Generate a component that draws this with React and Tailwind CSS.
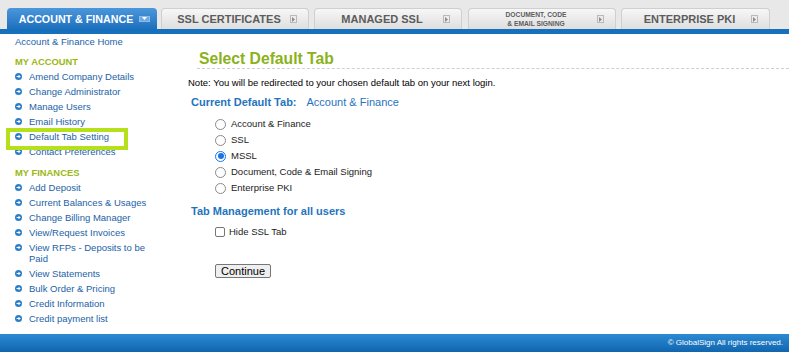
import React from "react";

const FONT = { fontFamily: '"Liberation Sans", Arial, sans-serif' };

function InactiveIcon() {
  return (
    <span className="flex h-[8px] w-[7px] items-center justify-center border border-[#b9b9b9] bg-[#ececec]">
      <svg width="3" height="5" viewBox="0 0 3 5">
        <path d="M0 0 L3 2.5 L0 5 Z" fill="#8c8c8c" />
      </svg>
    </span>
  );
}

function ActiveIcon() {
  return (
    <span className="flex h-[6px] w-[11px] items-center justify-center bg-[#6fa9e0] border border-[#8dbbe8]">
      <svg width="5" height="3" viewBox="0 0 5 3">
        <path d="M0 0 L5 0 L2.5 3 Z" fill="#ffffff" />
      </svg>
    </span>
  );
}

function Tab({ children, active, small, className = "" }) {
  if (active) {
    return (
      <div className="flex h-[21px] w-[150px] shrink-0 items-center rounded-t-[4px] bg-gradient-to-b from-[#4b97dc] to-[#1c70bd] pl-[6px] pr-[7px]">
        <span className="flex-1 pt-[1px] text-center text-[10.7px] font-bold leading-none text-white">{children}</span>
        <ActiveIcon />
      </div>
    );
  }
  return (
    <div className={`flex h-[21px] shrink-0 items-center rounded-t-[4px] border border-b-0 border-[#cfcfcf] bg-gradient-to-b from-[#f7f7f7] to-[#dedede] pl-[6px] pr-[11px] ${className}`}>
      {small ? (
        <span className="flex-1 text-center text-[6.7px] font-bold leading-[9px] text-[#5c5c5c]">{children}</span>
      ) : (
        <span className="flex-1 pt-[1px] text-center text-[11px] font-bold leading-none text-[#5c5c5c]">{children}</span>
      )}
      <InactiveIcon />
    </div>
  );
}

function Bullet() {
  return (
    <span className="mt-[2px] flex h-[7px] w-[7px] shrink-0 items-center justify-center rounded-full bg-[#2b7fc8]">
      <svg width="5" height="5" viewBox="0 0 5 5">
        <path d="M0.6 2.5 H4 M2.5 1 L4 2.5 L2.5 4" stroke="#fff" strokeWidth="1" fill="none" />
      </svg>
    </span>
  );
}

function Item({ children }) {
  return (
    <li className="flex gap-[7px] py-[2px] text-[9.5px] leading-[11px] text-[#1c62a6]">
      <Bullet />
      <span>{children}</span>
    </li>
  );
}

function Radio({ checked, label }) {
  return (
    <div className="flex h-[16px] items-center">
      {checked ? (
        <span className="flex h-[11px] w-[11px] items-center justify-center rounded-full border border-[#1a73e8] bg-white">
          <span className="h-[6px] w-[6px] rounded-full bg-[#1a73e8]" />
        </span>
      ) : (
        <span className="h-[11px] w-[11px] rounded-full border border-[#8a8a8a] bg-white" />
      )}
      <span className="ml-[5px] text-[9.5px] leading-none text-[#222]">{label}</span>
    </div>
  );
}

export default function App() {
  return (
    <div className="relative flex h-[352px] w-[789px] flex-col overflow-hidden bg-white" style={FONT}>
      {/* Tabs bar */}
      <div className="flex h-[29px] shrink-0 items-end bg-[#e8e8e8] pl-[7px]">
        <Tab active>ACCOUNT &amp; FINANCE</Tab>
        <Tab className="ml-[4px] w-[148px]">SSL CERTIFICATES</Tab>
        <Tab className="ml-[5px] w-[148px]">MANAGED SSL</Tab>
        <Tab small className="ml-[6px] w-[148px]">
          DOCUMENT, CODE
          <br />
          &amp; EMAIL SIGNING
        </Tab>
        <Tab className="ml-[5px] w-[149px]">ENTERPRISE PKI</Tab>
      </div>
      <div className="h-[5px] shrink-0 bg-[#1670bb]" />

      {/* Body */}
      <div className="flex min-h-0 flex-1">
        {/* Sidebar */}
        <div className="w-[185px] shrink-0 pl-[15px] pt-[2px]">
          <div className="text-[9.5px] leading-[11px] text-[#1c62a6]">Account &amp; Finance Home</div>
          <div className="mt-[9px] text-[9.4px] font-bold leading-[11px] text-[#9bb814]">MY ACCOUNT</div>
          <ul className="mt-[2px] w-[140px]">
            <Item>Amend Company Details</Item>
            <Item>Change Administrator</Item>
            <Item>Manage Users</Item>
            <Item>Email History</Item>
            <Item>Default Tab Setting</Item>
            <Item>Contact Preferences</Item>
          </ul>
          <div className="mt-[8px] text-[9.4px] font-bold leading-[11px] text-[#9bb814]">MY FINANCES</div>
          <ul className="mt-[2px] w-[140px]">
            <Item>Add Deposit</Item>
            <Item>Current Balances &amp; Usages</Item>
            <Item>Change Billing Manager</Item>
            <Item>View/Request Invoices</Item>
            <Item>View RFPs - Deposits to be Paid</Item>
            <Item>View Statements</Item>
            <Item>Bulk Order &amp; Pricing</Item>
            <Item>Credit Information</Item>
            <Item>Credit payment list</Item>
          </ul>
        </div>

        {/* Main */}
        <div className="min-w-0 flex-1 pl-[3px] pt-[16px]">
          <div className="ml-[9px] border-b border-dashed border-[#cfcfcf] pl-[2px]">
            <h1 className="text-[15.7px] font-bold leading-[18px] text-[#8ab21a]">Select Default Tab</h1>
          </div>
          <p className="mt-[8px] text-[9.5px] leading-[12px] text-black">
            Note: You will be redirected to your chosen default tab on your next login.
          </p>
          <div className="ml-[3px] mt-[7px] flex text-[11px] leading-[13px] text-[#1f74bd]">
            <span className="font-bold">Current Default Tab:</span>
            <span className="ml-[10px]">Account &amp; Finance</span>
          </div>
          <div className="ml-[27px] mt-[7px]">
            <Radio label="Account & Finance" />
            <Radio label="SSL" />
            <Radio label="MSSL" checked />
            <Radio label="Document, Code & Email Signing" />
            <Radio label="Enterprise PKI" />
          </div>
          <div className="ml-[3px] mt-[9px] text-[11px] font-bold leading-[13px] text-[#1f74bd]">
            Tab Management for all users
          </div>
          <div className="ml-[27px] mt-[6px] flex h-[16px] items-center">
            <span className="h-[10px] w-[10px] rounded-[2px] border border-[#767676] bg-white" />
            <span className="ml-[4px] text-[9.5px] leading-none text-[#222]">Hide SSL Tab</span>
          </div>
          <button className="ml-[27px] mt-[24px] flex h-[14px] w-[56px] items-center justify-center rounded-[2px] border border-[#767676] bg-[#efefef] text-[11px] leading-none text-black">
            Continue
          </button>
        </div>
      </div>

      {/* Footer */}
      <div className="flex h-[18px] shrink-0 items-center justify-end bg-gradient-to-b from-[#2b8ad4] to-[#1066ae] pr-[6px]">
        <span className="text-[8px] leading-none text-white">© GlobalSign All rights reserved.</span>
      </div>

      {/* Highlight annotation */}
      <div className="absolute left-[6px] top-[128px] h-[22px] w-[122px] border-[4px] border-[#b6e01c]" />
    </div>
  );
}
